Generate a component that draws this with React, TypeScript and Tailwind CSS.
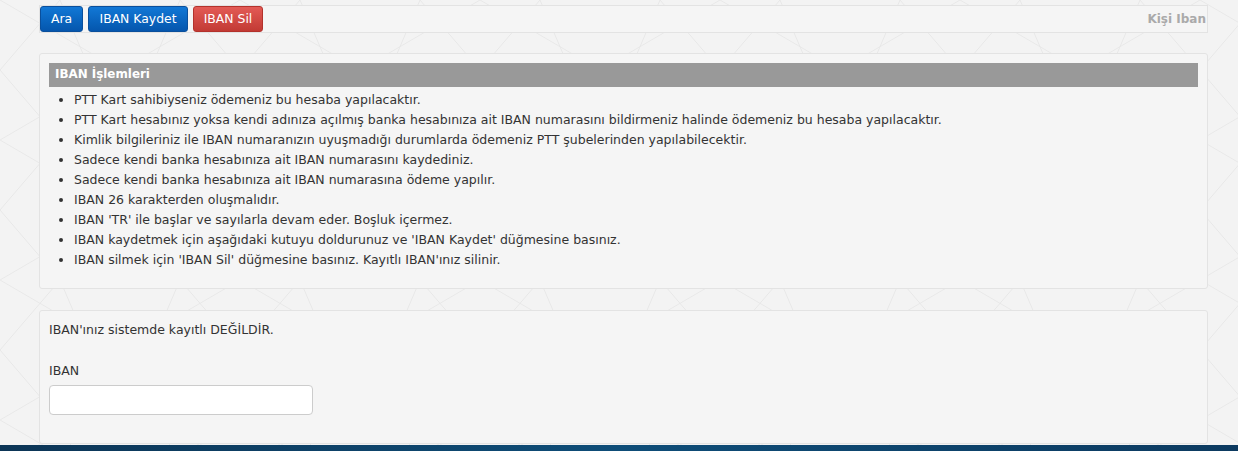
import React from "react";

const items = [
  "PTT Kart sahibiyseniz ödemeniz bu hesaba yapılacaktır.",
  "PTT Kart hesabınız yoksa kendi adınıza açılmış banka hesabınıza ait IBAN numarasını bildirmeniz halinde ödemeniz bu hesaba yapılacaktır.",
  "Kimlik bilgileriniz ile IBAN numaranızın uyuşmadığı durumlarda ödemeniz PTT şubelerinden yapılabilecektir.",
  "Sadece kendi banka hesabınıza ait IBAN numarasını kaydediniz.",
  "Sadece kendi banka hesabınıza ait IBAN numarasına ödeme yapılır.",
  "IBAN 26 karakterden oluşmalıdır.",
  "IBAN 'TR' ile başlar ve sayılarla devam eder. Boşluk içermez.",
  "IBAN kaydetmek için aşağıdaki kutuyu doldurunuz ve 'IBAN Kaydet' düğmesine basınız.",
  "IBAN silmek için 'IBAN Sil' düğmesine basınız. Kayıtlı IBAN'ınız silinir.",
];

function Pattern() {
  return (
    <svg className="absolute inset-0 w-full h-full pointer-events-none" xmlns="http://www.w3.org/2000/svg">
      <defs>
        <pattern id="p" width="240" height="140" patternUnits="userSpaceOnUse">
          <g stroke="#e8e8e8" strokeWidth="1" fill="none">
            <path d="M0 0 L120 70 L240 0" />
            <path d="M0 140 L120 70 L240 140" />
            <path d="M60 0 L120 140 L180 0" />
            <path d="M0 70 L60 140 M240 70 L180 140" />
            <path d="M0 70 L60 0 M240 70 L180 0" />
          </g>
        </pattern>
      </defs>
      <rect width="100%" height="100%" fill="url(#p)" />
    </svg>
  );
}

export default function App() {
  return (
    <div
      className="relative w-[1238px] h-[451px] overflow-hidden bg-[#f3f3f3] text-[#333]"
      style={{ fontFamily: "Tahoma, 'DejaVu Sans', Verdana, sans-serif" }}
    >
      <Pattern />
      <div className="relative flex flex-col h-full">
        <div className="flex-1 pl-[39px] pr-[30px] pt-[5px]">
          {/* Toolbar */}
          <div className="flex items-center h-[28px] bg-[#f5f5f5] border border-[#e3e3e3] pr-[1px]">
            <div className="flex gap-[5px] items-center h-full">
              <button className="h-[26px] w-[43px] rounded-[3px] text-white text-[12.4px] bg-gradient-to-b from-[#1278d6] to-[#0556ad] border border-[#0a4f9c] leading-none">
                Ara
              </button>
              <button className="h-[26px] w-[100px] rounded-[3px] text-white text-[12.4px] bg-gradient-to-b from-[#1278d6] to-[#0556ad] border border-[#0a4f9c] leading-none">
                IBAN Kaydet
              </button>
              <button className="h-[26px] w-[70px] rounded-[3px] text-white text-[12.4px] bg-gradient-to-b from-[#e35a55] to-[#c23a34] border border-[#b3322c] leading-none">
                IBAN Sil
              </button>
            </div>
            <div className="ml-auto text-[12px] font-bold text-[#aaaaaa]">Kişi Iban</div>
          </div>

          {/* Panel 1 */}
          <div className="mt-[20px] bg-[#f5f5f5] border border-[#e3e3e3] rounded-[3px] p-[9px] pb-[18px]">
            <div className="h-[24px] bg-[#999999] text-white text-[11.9px] font-bold flex items-center pl-[6px]">
              IBAN İşlemleri
            </div>
            <ul className="mt-[3px] pl-[25px] list-disc text-[12.5px] leading-[20px] marker:text-[#333]">
              {items.map((t) => (
                <li key={t}>{t}</li>
              ))}
            </ul>
          </div>

          {/* Panel 2 */}
          <div className="mt-[21px] bg-[#f5f5f5] border border-[#e3e3e3] rounded-[3px] px-[9px] pt-[9px] h-[134px]">
            <div className="text-[12.5px] leading-[20px]">IBAN'ınız sistemde kayıtlı DEĞİLDİR.</div>
            <div className="mt-[21px] text-[12.5px] leading-[20px]">IBAN</div>
            <input className="mt-[4px] w-[264px] h-[30px] bg-white border border-[#cccccc] rounded-[4px] outline-none px-2 text-[12px]" />
          </div>
        </div>
        <div className="h-[6px] bg-gradient-to-r from-[#0c3556] via-[#0e4d78] to-[#0c3a60]" />
      </div>
    </div>
  );
}
